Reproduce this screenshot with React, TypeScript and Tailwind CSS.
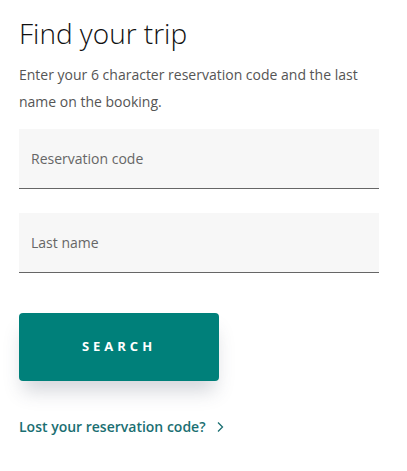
export default function App() {
  return (
    <div className="min-h-[471px] bg-white px-[19px] pt-[13px] text-[#222]" style={{ fontFamily: '"Open Sans", "Noto Sans", sans-serif' }}>
      <h1 className="text-[28px] font-light leading-[40px] text-[#111]">Find your trip</h1>
      <p className="mt-[8px] w-[360px] text-[14px] leading-[27px] text-[#555]">
        Enter your 6 character reservation code and the last name on the booking.
      </p>
      <form className="mt-[14px] flex w-[360px] flex-col gap-[24px]" onSubmit={(e) => e.preventDefault()}>
        <input
          className="h-[60px] w-full border-b border-[#666] bg-[#f7f7f7] px-[12px] text-[14px] text-[#333] outline-none placeholder:text-[#666]"
          placeholder="Reservation code"
        />
        <input
          className="h-[60px] w-full border-b border-[#666] bg-[#f7f7f7] px-[12px] text-[14px] text-[#333] outline-none placeholder:text-[#666]"
          placeholder="Last name"
        />
        <button
          type="submit"
          className="mt-[16px] h-[68px] w-[200px] rounded-[4px] bg-[#00807a] text-[13px] font-bold tracking-[4px] text-white shadow-[0_14px_18px_-4px_rgba(60,70,90,0.22)]"
        >
          SEARCH
        </button>
      </form>
      <a href="#" className="mt-[35px] flex items-center gap-[10px] text-[14px] font-semibold text-[#1b6f72]">
        Lost your reservation code?
        <svg width="8" height="12" viewBox="0 0 8 12" fill="none" stroke="currentColor" strokeWidth="1.3">
          <path d="M2 1.5 6.5 6 2 10.5" />
        </svg>
      </a>
    </div>
  );
}
